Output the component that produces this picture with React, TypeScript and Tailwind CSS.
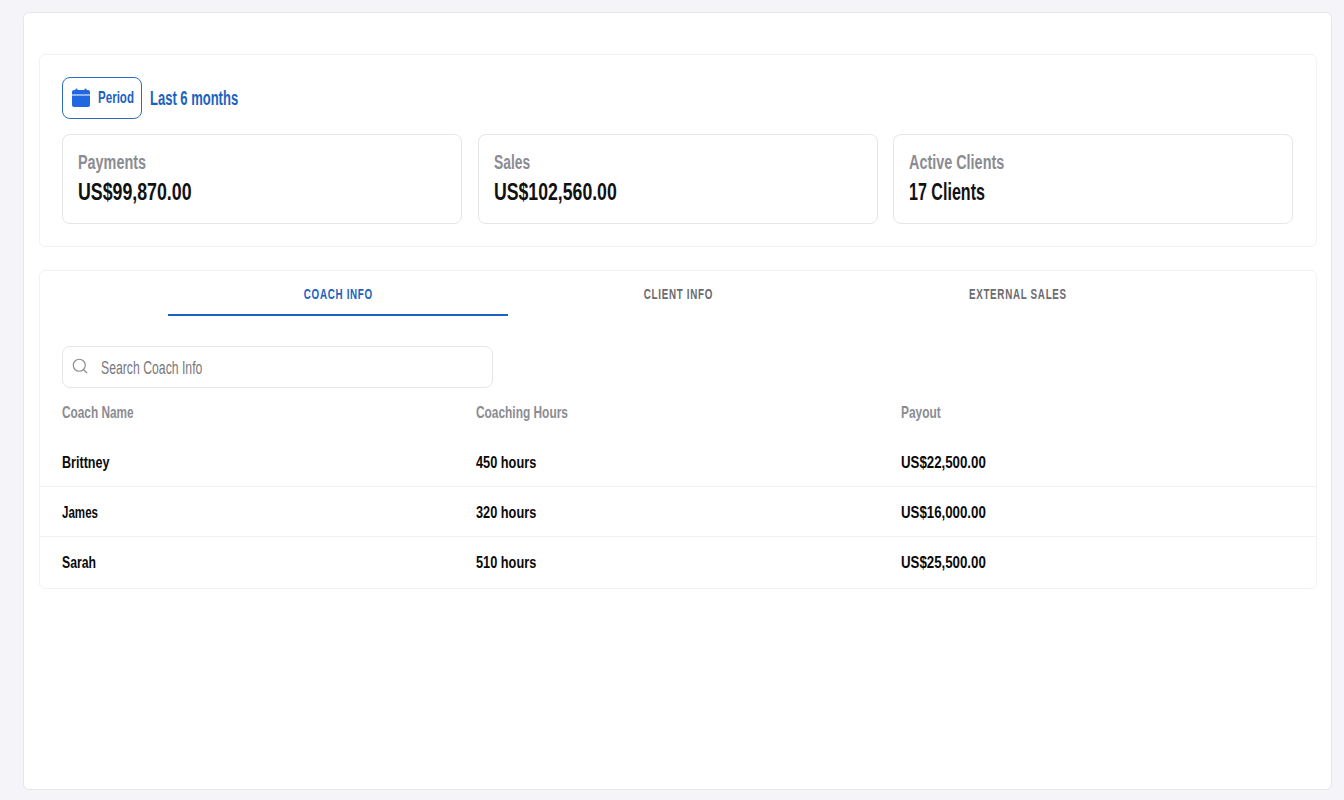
import { Search } from "lucide-react";

const font = "font-['Liberation_Sans',sans-serif]";

// no Oswald on this box, so squeeze Liberation Sans to the same widths
const Narrow = ({ className, children }: { className: string; children: React.ReactNode }) => (
  <span className={`inline-block origin-left whitespace-nowrap ${className}`}>{children}</span>
);

const stats = [
  { label: "Payments", labelScale: "scale-x-[0.72]", value: "US$99,870.00", valueScale: "scale-x-[0.74]" },
  { label: "Sales", labelScale: "scale-x-[0.69]", value: "US$102,560.00", valueScale: "scale-x-[0.736]" },
  { label: "Active Clients", labelScale: "scale-x-[0.72]", value: "17 Clients", valueScale: "scale-x-[0.67]" },
];

const tabs = ["COACH INFO", "CLIENT INFO", "EXTERNAL SALES"];

const coaches = [
  { name: "Brittney", nameScale: "scale-x-[0.74]", hours: "450 hours", payout: "US$22,500.00" },
  { name: "James", nameScale: "scale-x-[0.68]", hours: "320 hours", payout: "US$16,000.00" },
  { name: "Sarah", nameScale: "scale-x-[0.72]", hours: "510 hours", payout: "US$25,500.00" },
];

const Calendar = () => (
  <svg viewBox="0 0 20 20" className="h-5 w-5 shrink-0 fill-[#2168e0]">
    <rect x="4.5" y="0.5" width="2" height="3" rx="1" />
    <rect x="13.5" y="0.5" width="2" height="3" rx="1" />
    <path d="M3 2h14a2 2 0 0 1 2 2v2.5H1V4a2 2 0 0 1 2-2z" />
    <path d="M1 7.5h18V17a2 2 0 0 1-2 2H3a2 2 0 0 1-2-2z" />
  </svg>
);

export default function App() {
  return (
    <div className={`${font} h-[800px] w-[1344px] overflow-hidden bg-[#f4f4f9] pl-[23px] pr-3 pt-3 pb-2.5`}>
      <div className="flex h-full flex-col rounded-md border border-[#e6e6ea] bg-white pl-[15px] pr-[14px] pt-[41px]">
        <section className="rounded-md border border-[#f2f2f4] pb-[22px] pl-[22px] pr-[23px] pt-[22px]">
          <div className="flex items-center gap-2">
            <div className="flex h-[42px] w-20 items-center gap-[7px] rounded-lg border border-[#2f6cc0] pl-2">
              <Calendar />
              <Narrow className="scale-x-[0.68] text-[17px] font-bold text-[#1b62c0]">Period</Narrow>
            </div>
            <Narrow className="scale-x-[0.65] text-[20px] font-bold text-[#1b62c0]">Last 6 months</Narrow>
          </div>
          <div className="mt-[15px] grid grid-cols-3 gap-[15.5px]">
            {stats.map((s) => (
              <div key={s.label} className="h-[90px] rounded-lg border border-[#e6e6ea] px-[15px] pt-[13px]">
                <div className="h-[29px]">
                  <Narrow className={`${s.labelScale} text-[20px] font-bold leading-[28px] text-[#8b8c92]`}>{s.label}</Narrow>
                </div>
                <div className="h-[29px]">
                  <Narrow className={`${s.valueScale} text-[24px] font-bold leading-[29px] text-[#111114]`}>{s.value}</Narrow>
                </div>
              </div>
            ))}
          </div>
        </section>

        <section className="mt-[23px] h-[319px] rounded-md border border-[#f2f2f4]">
          <div className="flex pl-[128px]">
            {tabs.map((t, i) => (
              <div
                key={t}
                className={
                  i === 0
                    ? "flex h-[45px] w-[340px] items-center justify-center border-b-2 border-[#1b62c0] pt-[3px] text-[#1b62c0]"
                    : "flex h-[45px] w-[340px] items-center justify-center border-b-2 border-transparent pt-[3px] text-[#6a6b70]"
                }
              >
                <span className="inline-block origin-center scale-x-[0.7] whitespace-nowrap text-[14px] font-bold tracking-[1px]">{t}</span>
              </div>
            ))}
          </div>

          <div className="ml-[22px] mt-[30px] flex h-[42px] w-[431px] items-center gap-3 rounded-lg border border-[#e6e6ea] pl-2">
            <Search className="mb-[3px] h-[18px] w-[18px] text-[#8b8c92]" strokeWidth={1.5} />
            <Narrow className="mt-[2px] scale-x-[0.68] text-[18px] text-[#77787e]">Search Coach Info</Narrow>
          </div>

          <div className="mt-3 grid h-[37px] grid-cols-[414px_425px_1fr] pl-[22px] text-[17px] font-bold text-[#8b8c92]">
            <div><Narrow className="scale-x-[0.695]">Coach Name</Narrow></div>
            <div><Narrow className="scale-x-[0.7]">Coaching Hours</Narrow></div>
            <div><Narrow className="scale-x-[0.7]">Payout</Narrow></div>
          </div>
          {coaches.map((c, i) => (
            <div
              key={c.name}
              className={
                i < coaches.length - 1
                  ? "grid h-[50px] grid-cols-[414px_425px_1fr] items-center border-b border-[#f2f2f4] pl-[22px] pt-[2px] text-[17px] font-bold text-[#0a0a0a]"
                  : "grid h-[50px] grid-cols-[414px_425px_1fr] items-center pl-[22px] pt-[1px] text-[17px] font-bold text-[#0a0a0a]"
              }
            >
              <div><Narrow className={c.nameScale}>{c.name}</Narrow></div>
              <div><Narrow className="scale-x-[0.75]">{c.hours}</Narrow></div>
              <div><Narrow className="scale-x-[0.78]">{c.payout}</Narrow></div>
            </div>
          ))}
        </section>
      </div>
    </div>
  );
}
